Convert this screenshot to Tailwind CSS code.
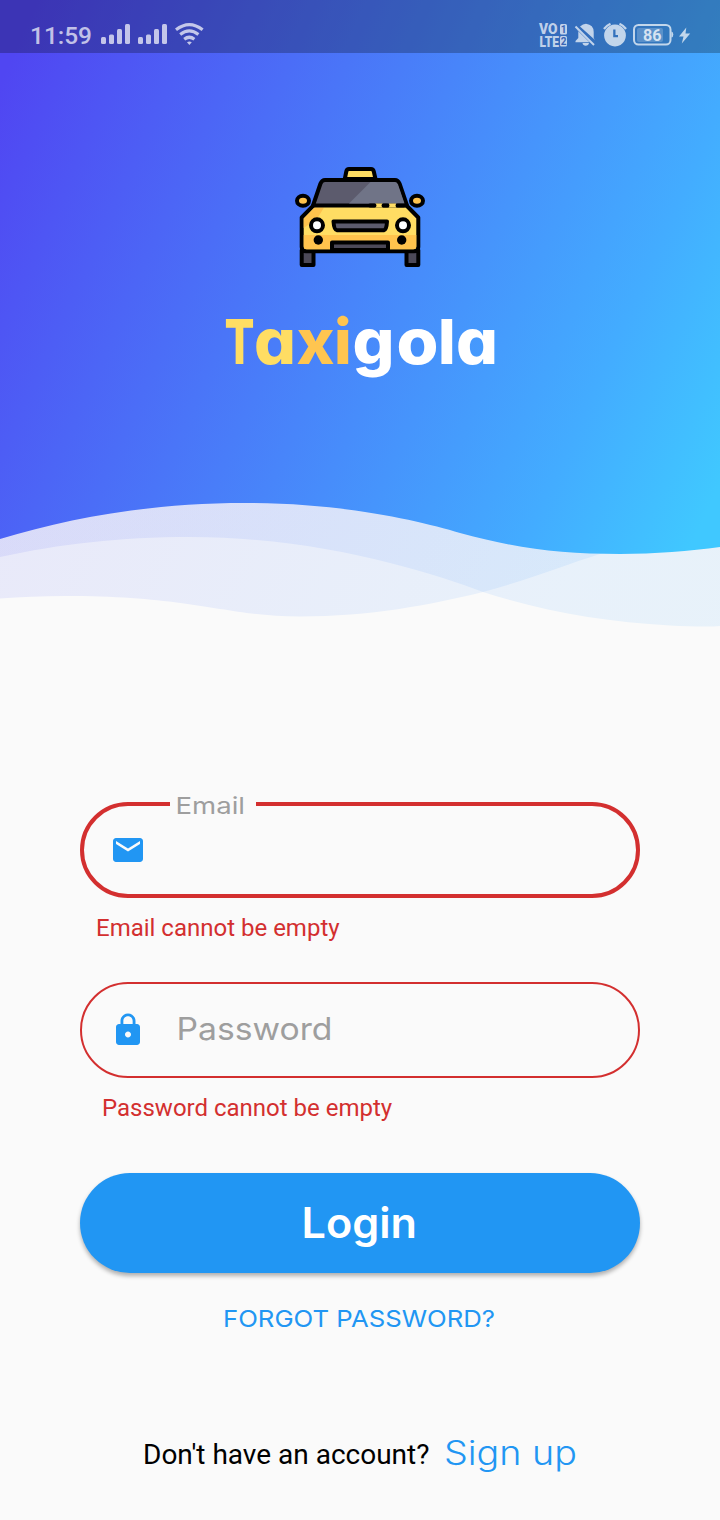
<!DOCTYPE html>
<html lang="en">
<head>
<meta charset="utf-8">
<meta name="viewport" content="width=device-width">
<title>Taxigola</title>
<script src="https://cdn.jsdelivr.net/npm/@tailwindcss/browser@4"></script>
</head>
<body class="bg-[#fafafa] font-['Roboto',sans-serif]">
<div class="relative w-[720px] h-[1520px] bg-[#fafafa] overflow-hidden flex flex-col">
  <!-- Gradient waves behind the header -->
  <svg class="absolute left-0 top-0" width="720" height="640" viewBox="0 0 720 640">
    <defs>
      <linearGradient id="sky" gradientUnits="userSpaceOnUse" x1="0" y1="0" x2="780" y2="350">
        <stop offset=".04" stop-color="#5046f2"/><stop offset=".82" stop-color="#43acff"/><stop offset="1" stop-color="#40c8ff"/>
      </linearGradient>
      <linearGradient id="mist" gradientUnits="userSpaceOnUse" x1="0" y1="300" x2="755" y2="675">
        <stop offset="0" stop-color="#5046f2"/><stop offset=".75" stop-color="#45a0fe"/><stop offset="1" stop-color="#40a8f5"/>
      </linearGradient>
    </defs>
    <path fill="url(#mist)" opacity=".1" d="M0 0H720V626C710 627 690 626.500 670 625.500C605 622 545 612 483 592C430 572 320 537 190 537C120 537 60 544 0 557Z"/>
    <path fill="url(#mist)" opacity=".1" d="M0 0H720V500C690 523 650 538 600 554C565 565 525 581 483 592C430 605 370 616.500 300 616.500C225 616.500 195 596 65 596C42 596 20 597 0 598.500Z"/>
    <path fill="url(#sky)" d="M0 0H720V547C690 551 655 554 620 554C560 554 520 549 460 533C420 521 345 503 245 503C150 503 70 518 0 539Z"/>
  </svg>

  <!-- Status bar -->
  <div class="relative h-[53px] shrink-0 bg-black/25 flex">
    <svg width="720" height="53" viewBox="0 0 720 53" fill="#fff" fill-opacity=".7">
      <text x="30" y="44" font-family="Roboto" font-weight="500" font-size="24" textLength="62" lengthAdjust="spacingAndGlyphs">11:59</text>
      <g id="bars"><rect x="101" y="37" width="5" height="7" rx="1.500"/><rect x="109" y="34.500" width="5" height="9.500" rx="1.500"/><rect x="117" y="29" width="5" height="15" rx="1.500"/><rect x="125" y="24" width="5" height="20" rx="1.500"/></g>
      <use href="#bars" x="37"/>
      <g fill="none" stroke="#fff" stroke-opacity=".7" stroke-width="3.200"><path d="M176 29.800Q189.300 19.500 202.600 29.800M180.200 34.400Q189.300 27.300 198.400 34.400M184.200 39.200Q189.300 35.300 194.400 39.200"/></g>
      <path d="M187 42.200Q189.300 40.600 191.800 42.200L189.400 45Z"/>
      <g font-family="Roboto" font-weight="900" font-size="14.500">
        <text x="539" y="34.300" textLength="18.500" lengthAdjust="spacingAndGlyphs">VO</text>
        <text x="539.500" y="46.600" textLength="19.500" lengthAdjust="spacingAndGlyphs">LTE</text>
      </g>
      <rect x="560" y="24" width="7" height="10.500" rx="1.500"/><rect x="560" y="36" width="7" height="10.500" rx="1.500"/>
      <g font-family="Roboto" font-weight="700" font-size="10" fill="#3a66b4" fill-opacity="1"><text x="560.700" y="33">1</text><text x="560.700" y="45">2</text></g>
      <path d="M580 26.500Q583 23.800 586 23.800Q593.700 24.800 593.700 32V38L595 40ZM576.500 29.500L589.500 42.300H575.500V41L578.300 38V31.500ZM582.500 43H589Q588.500 45.700 585.700 45.700Q583 45.700 582.500 43Z"/>
      <path d="M575.500 26.500L594 45" fill="none" stroke="#fff" stroke-opacity=".7" stroke-width="2"/>
      <path fill-rule="evenodd" d="M615 24.600A10.900 10.900 0 1 0 615.010 24.600ZM613.200 29.500H615.500V35H618V37.200H613.200Z"/>
      <path d="M604 29Q606.500 25.500 610.500 23.700M619.500 23.700Q623.500 25.500 626 29" fill="none" stroke="#fff" stroke-opacity=".7" stroke-width="2.300"/>
      <rect x="634" y="25" width="36.500" height="19.500" rx="4.500" fill="none" stroke="#fff" stroke-opacity=".7" stroke-width="2"/>
      <rect x="637" y="28" width="26" height="14" rx="2" fill-opacity=".2"/>
      <path d="M671.500 31.500Q673.300 32 673.300 34.500Q673.300 37 671.500 37.500Z"/>
      <text x="643" y="41" font-family="Roboto" font-weight="700" font-size="16" fill-opacity=".75" textLength="18.500" lengthAdjust="spacingAndGlyphs">86</text>
      <path d="M686.300 27.500L679 36.500H683.500L681.800 43.500L690.200 33.500H685.500Z"/>
    </svg>
  </div>

  <!-- Logo -->
  <div class="relative flex flex-col items-center pt-[112px]">
    <svg width="134" height="104" viewBox="293 165 134 104">
      <g stroke="#000" stroke-width="4" stroke-linejoin="round">
        <path fill="#4c4958" d="M301.700 250V265H313.500V250ZM406.500 250V265H418.300V250Z"/>
        <path fill="#ffdd63" d="M344.800 179L346.300 171.500Q346.800 169 349 169H371Q373.200 169 373.800 171.500L375.500 179Z"/>
        <path fill="#ffdd63" d="M314 205L301.700 217.500V247Q301.700 251.300 306 251.300H414Q418.300 251.300 418.300 247V217.500L406 205Z"/>
      </g>
      <path fill="#ffc34d" d="M314.500 207.500H324L317 219L303.700 228V218.500ZM303.700 235H416.300V246Q416.300 249.300 413 249.300H307Q303.700 249.300 303.700 246Z"/>
      <path fill="#5c5b6d" stroke="#000" stroke-width="4" stroke-linejoin="round" d="M313 205.500L320.500 183.500Q322 180 325 180H395Q398 180 399.500 183.500L407 205.500Z"/>
      <path fill="#707487" d="M349 203.500L370.500 182H394.500Q397 182 398 184.500L404.500 203.500Z"/>
      <path stroke="#ffdd63" stroke-width="4" d="M375.500 205.500H382.500M389 205.500H396"/>
      <path stroke="#000" stroke-width="4" stroke-linecap="round" d="M370 205.500H374.500M383.500 205.500H387.500M397.500 205.500H404"/>
      <g stroke="#000" stroke-width="4">
        <ellipse fill="#ffc34d" cx="303" cy="200.700" rx="6" ry="5"/><ellipse fill="#ffc34d" cx="417" cy="200.700" rx="6" ry="5"/>
        <circle fill="#fff" cx="317" cy="225.300" r="6"/><circle fill="#fff" cx="403" cy="225.300" r="6"/>
        <path fill="#5c5b6d" stroke-linejoin="round" d="M333.500 221.500H387Q386.600 230 384 230.300H337Q334 230 333.500 221.500Z"/>
        <path fill="#4c4958" stroke-linejoin="round" d="M332 250V242.500H388V250Z"/>
      </g>
      <circle cx="318.300" cy="240" r="4.700"/><circle cx="401.700" cy="240" r="4.700"/>
    </svg>
    <svg class="mt-[31px]" width="280" height="90" viewBox="220 300 280 90" font-family="Inter" font-weight="800" font-size="62.500" style="font-feature-settings:'cv11'">
      <text y="364" fill="#ffdd63"><tspan x="224.500" textLength="30" lengthAdjust="spacingAndGlyphs">T</tspan><tspan x="254" textLength="42" lengthAdjust="spacingAndGlyphs">a</tspan><tspan fill="#ffc550" x="296.500" textLength="38" lengthAdjust="spacingAndGlyphs">x</tspan><tspan fill="#ffc550" x="334">i</tspan><tspan fill="#fff" x="352.500" textLength="42" lengthAdjust="spacingAndGlyphs">g</tspan><tspan fill="#fff" x="396.500" textLength="42" lengthAdjust="spacingAndGlyphs">o</tspan><tspan fill="#fff" x="438">l</tspan><tspan fill="#fff" x="456" textLength="42" lengthAdjust="spacingAndGlyphs">a</tspan></text>
    </svg>
  </div>

  <!-- Form -->
  <main class="absolute left-[80px] top-[802px] w-[560px] flex flex-col">
    <div class="relative h-[96px] rounded-full border-4 border-[#d32f2f] flex items-center">
      <svg class="ml-[26px]" width="36" height="36" viewBox="0 0 24 24" fill="#2196f3"><path d="M20 4H4c-1.100 0-1.990.9-1.990 2L2 18c0 1.100.9 2 2 2h16c1.100 0 2-.9 2-2V6c0-1.100-.9-2-2-2zm0 4l-8 5-8-5V6l8 5 8-5v2z"/></svg>
      <div class="absolute left-[86px] top-[-15px] w-[86px] h-[30px] bg-[#fafafa]">
        <svg width="86" height="30" fill="#9e9e9e" font-family="Inter" font-size="23.500"><text x="5.500" y="22.500" textLength="69.500" lengthAdjust="spacingAndGlyphs">Email</text></svg>
      </div>
    </div>
    <p class="mt-[16px] ml-4 text-[24px] leading-[28px] text-[#d32f2f] whitespace-nowrap">Email cannot be empty</p>
    <div class="mt-[40px] h-[96px] rounded-full border-2 border-[#d32f2f] flex items-center">
      <svg class="ml-[28px]" width="36" height="36" viewBox="0 0 24 24" fill="#2196f3"><path d="M18 8h-1V6c0-2.760-2.240-5-5-5S7 3.240 7 6v2H6c-1.100 0-2 .9-2 2v10c0 1.100.9 2 2 2h12c1.100 0 2-.9 2-2V10c0-1.100-.9-2-2-2zm-6 9c-1.100 0-2-.9-2-2s.9-2 2-2 2 .9 2 2-.9 2-2 2zm3.100-9H8.900V6c0-1.710 1.390-3.100 3.100-3.100 1.710 0 3.100 1.390 3.100 3.100v2z"/></svg>
      <svg class="ml-[26px]" width="170" height="44" fill="#9e9e9e" font-family="Inter" font-size="31"><text x="4.500" y="32" textLength="156" lengthAdjust="spacingAndGlyphs">Password</text></svg>
    </div>
    <p class="mt-[16px] ml-[22px] text-[24px] leading-[28px] text-[#d32f2f] whitespace-nowrap">Password cannot be empty</p>
    <button class="mt-[50.5px] h-[100px] rounded-full bg-[#2196f3] shadow-[0_3px_4px_rgba(0,0,0,0.3)] flex items-center justify-center">
      <svg width="130" height="60" fill="#fff" font-family="Inter" font-weight="600" font-size="42"><text x="6.500" y="44.500" textLength="115.500" lengthAdjust="spacingAndGlyphs">Login</text></svg>
    </button>
    <a class="mt-[26.5px] self-center flex"><svg width="280" height="38" fill="#2196f3" font-family="Inter" font-size="23.500"><text x="3" y="28" textLength="272" lengthAdjust="spacingAndGlyphs">FORGOT PASSWORD?</text></svg></a>
    <div class="mt-[93px] ml-[63px] h-[50px] flex items-center">
      <span class="text-[28px] leading-[34px] whitespace-nowrap w-[290px]">Don't have an account?</span>
      <svg class="ml-[10px]" width="140" height="50" fill="#2196f3" font-family="Inter" font-weight="350" font-size="33.500"><text x="1" y="35" textLength="133" lengthAdjust="spacingAndGlyphs">Sign up</text></svg>
    </div>
  </main>
</div>
</body>
</html>
